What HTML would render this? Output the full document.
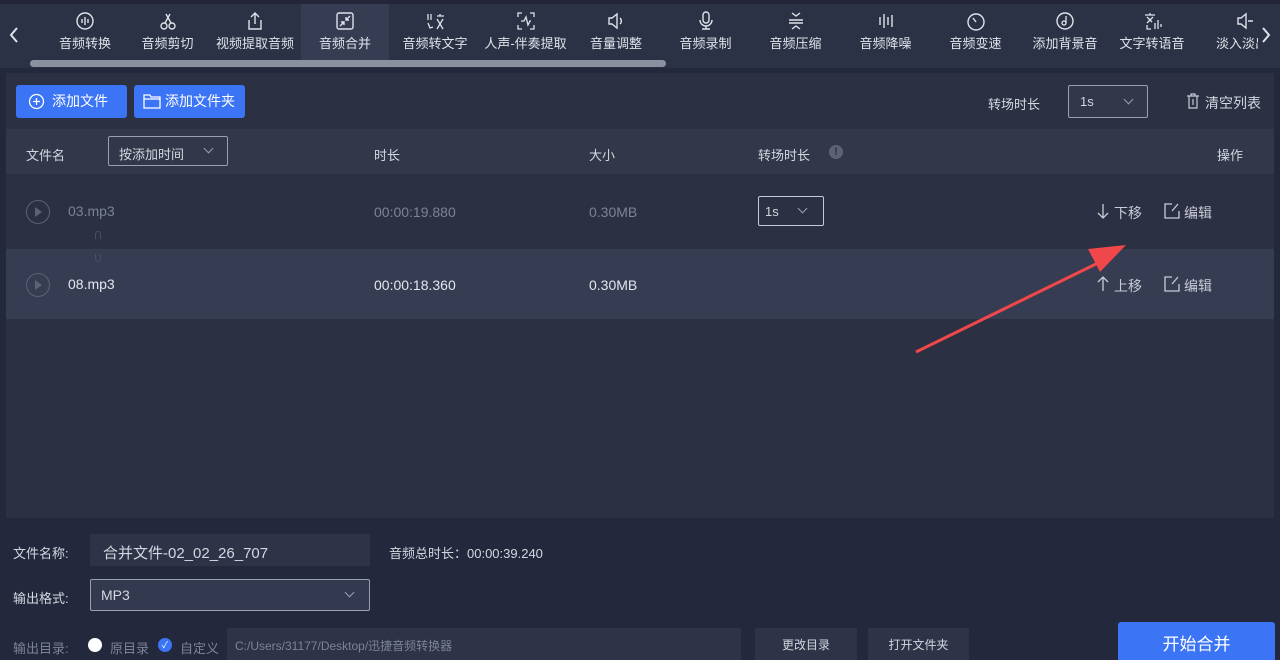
<!DOCTYPE html>
<html><head><meta charset="utf-8"><style>
*{margin:0;padding:0;box-sizing:border-box}
html,body{width:1280px;height:660px;overflow:hidden}
body{background:#24283c;font-family:"Liberation Sans","Noto Sans CJK SC",sans-serif;color:#d4d7e0;font-size:13px;position:relative}
.a{position:absolute}
.tabbar{left:0;top:4px;width:1280px;height:64px;background:#2c3245}
.tab{top:0;height:56px;text-align:center;font-size:13px;color:#dfe2ea}
.tab svg{display:block;margin:7px auto 2px;width:20px;height:20px}
.btn{background:#3b74f5;color:#fff;border-radius:3px;font-size:14px;height:33px;line-height:33px}
.sel{border:1px solid #9aa0b2;border-radius:2px;background:#323849}
.chev{position:absolute;width:7px;height:7px;border-right:1px solid #9aa0b2;border-bottom:1px solid #9aa0b2;transform:rotate(45deg)}
.dim{color:#7d8396}
</style></head><body>
<div class="a" style="left:0;top:0;width:1280px;height:4px;background:#222638"></div>
<div class="a tabbar">
 <div class="a" style="left:301px;top:0;width:88px;height:56px;background:#363d52"></div>
 <svg class="a" style="left:8px;top:22px" width="12" height="18"><path d="M9 2 L3 9 L9 16" stroke="#dfe2ea" stroke-width="2" fill="none"/></svg>
 <svg class="a" style="left:1260px;top:22px" width="12" height="18"><path d="M3 2 L9 9 L3 16" stroke="#dfe2ea" stroke-width="2" fill="none"/></svg>
 <div class="a tab" style="left:40px;width:90px"><svg viewBox="0 0 20 20"><circle cx="10" cy="10" r="8" stroke="#dfe2ea" stroke-width="1.4" fill="none"/><path d="M7 8v4M10 6v8M13 8v4" stroke="#dfe2ea" stroke-width="1.4"/></svg>音频转换</div>
 <div class="a tab" style="left:130px;width:75px"><svg viewBox="0 0 20 20"><circle cx="6" cy="15" r="3" stroke="#dfe2ea" stroke-width="1.4" fill="none"/><circle cx="14" cy="15" r="3" stroke="#dfe2ea" stroke-width="1.4" fill="none"/><path d="M7 12L12 3M13 12L8 3" stroke="#dfe2ea" stroke-width="1.4"/></svg>音频剪切</div>
 <div class="a tab" style="left:210px;width:90px"><svg viewBox="0 0 20 20"><path d="M4 9v9h12V9M10 13V2M6 6l4-4 4 4" stroke="#dfe2ea" stroke-width="1.4" fill="none"/></svg>视频提取音频</div>
 <div class="a tab" style="left:301px;width:88px"><svg viewBox="0 0 20 20"><rect x="2" y="2" width="16" height="16" rx="2" stroke="#dfe2ea" stroke-width="1.4" fill="none"/><path d="M15 5l-4 4M11 6v3h3M5 15l4-4M6 11h3v3" stroke="#dfe2ea" stroke-width="1.4" fill="none"/></svg>音频合并</div>
 <div class="a tab" style="left:395px;width:80px"><svg viewBox="0 0 20 20"><path d="M3 3v6M6 3v6M3 12l2 5 3-1M12 5h7M15 3v2M12 8l6 10M18 8l-6 10" stroke="#dfe2ea" stroke-width="1.3" fill="none"/></svg>音频转文字</div>
 <div class="a tab" style="left:478px;width:95px"><svg viewBox="0 0 20 20"><path d="M2 6V2h4M14 2h4v4M18 14v4h-4M6 18H2v-4M5 10h3l2-4 2 8 2-4h1" stroke="#dfe2ea" stroke-width="1.3" fill="none"/></svg>人声-伴奏提取</div>
 <div class="a tab" style="left:580px;width:72px"><svg viewBox="0 0 20 20"><path d="M3 7h3l5-4v14l-5-4H3z M14 7a4 4 0 010 6" stroke="#dfe2ea" stroke-width="1.4" fill="none"/></svg>音量调整</div>
 <div class="a tab" style="left:668px;width:75px"><svg viewBox="0 0 20 20"><rect x="7" y="1" width="6" height="11" rx="3" stroke="#dfe2ea" stroke-width="1.4" fill="none"/><path d="M4 9a6 6 0 0012 0M10 15v3M6 18h8" stroke="#dfe2ea" stroke-width="1.4" fill="none"/></svg>音频录制</div>
 <div class="a tab" style="left:758px;width:75px"><svg viewBox="0 0 20 20"><path d="M6 2l4 3 4-3M3 9h14M3 12h14M6 18l4-3 4 3" stroke="#dfe2ea" stroke-width="1.4" fill="none"/></svg>音频压缩</div>
 <div class="a tab" style="left:848px;width:75px"><svg viewBox="0 0 20 20"><path d="M4 6v8M8 3v14M12 6v8M16 4v12" stroke="#dfe2ea" stroke-width="1.4"/></svg>音频降噪</div>
 <div class="a tab" style="left:938px;width:75px"><svg viewBox="0 0 20 20"><circle cx="10" cy="11" r="8" stroke="#dfe2ea" stroke-width="1.4" fill="none"/><path d="M7 7l3 4" stroke="#dfe2ea" stroke-width="1.4"/></svg>音频变速</div>
 <div class="a tab" style="left:1025px;width:80px"><svg viewBox="0 0 20 20"><circle cx="10" cy="10" r="8" stroke="#dfe2ea" stroke-width="1.4" fill="none"/><circle cx="9" cy="12" r="2" stroke="#dfe2ea" stroke-width="1.3" fill="none"/><path d="M11 12V5" stroke="#dfe2ea" stroke-width="1.3"/></svg>添加背景音</div>
 <div class="a tab" style="left:1112px;width:80px"><svg viewBox="0 0 20 20"><path d="M8 2v2M3 4h10M5 6l5 5M11 6l-6 6M5 14v4h4M13 12v6M16 9v9M19 13v3" stroke="#dfe2ea" stroke-width="1.3" fill="none"/></svg>文字转语音</div>
 <div class="a tab" style="left:1200px;width:58px;overflow:hidden;text-align:left"><svg viewBox="0 0 20 20" style="margin-left:35px"><path d="M3 7h3l5-4v14l-5-4H3z M13 10h5" stroke="#dfe2ea" stroke-width="1.4" fill="none"/></svg><span style="margin-left:16px;white-space:nowrap">淡入淡出</span></div>
 <div class="a" style="left:30px;top:56px;width:636px;height:7px;border-radius:4px;background:#8a90a0"></div>
</div>
<div class="a" style="left:6px;top:73px;width:1268px;height:445px;background:#2b3043"></div>
<div class="a btn" style="left:16px;top:85px;width:111px"><svg class="a" style="left:12px;top:8px" width="17" height="17"><circle cx="8.5" cy="8.5" r="7" stroke="#fff" stroke-width="1.3" fill="none"/><path d="M8.5 5v7M5 8.5h7" stroke="#fff" stroke-width="1.3"/></svg><span style="margin-left:36px">添加文件</span></div>
<div class="a btn" style="left:134px;top:85px;width:111px"><svg class="a" style="left:9px;top:8px" width="18" height="17"><path d="M1 2h6l1 2h9v11H1z M1 6h16" stroke="#fff" stroke-width="1.3" fill="none"/></svg><span style="margin-left:31px">添加文件夹</span></div>
<div class="a" style="left:988px;top:94px">转场时长</div>
<div class="a sel" style="left:1068px;top:85px;width:80px;height:33px"><span class="a" style="left:11px;top:8px">1s</span><div class="chev" style="left:56px;top:10px"></div></div>
<svg class="a" style="left:1186px;top:93px" width="14" height="16"><path d="M1 3h12M5 3V1h4v2M3 3v12h8V3M7 6v6" stroke="#c9ccd6" stroke-width="1.2" fill="none"/></svg>
<div class="a" style="left:1205px;top:93px;font-size:14px">清空列表</div>
<div class="a" style="left:6px;top:129px;width:1268px;height:45px;background:#323849"></div>
<div class="a" style="left:26px;top:145px">文件名</div>
<div class="a sel" style="left:108px;top:136px;width:120px;height:30px"><span class="a" style="left:10px;top:7px">按添加时间</span><div class="chev" style="left:96px;top:8px"></div></div>
<div class="a" style="left:374px;top:145px">时长</div>
<div class="a" style="left:589px;top:145px">大小</div>
<div class="a" style="left:758px;top:145px">转场时长</div>
<div class="a" style="left:829px;top:145px;width:14px;height:14px;border-radius:7px;background:#5c6273;color:#2b3043;font-size:11px;font-weight:bold;text-align:center;line-height:14px">!</div>
<div class="a" style="left:1217px;top:145px">操作</div>
<!-- row1 -->
<div class="a" style="left:26px;top:200px;width:24px;height:24px;border:1px solid #5c6273;border-radius:12px"></div>
<div class="a" style="left:35px;top:207px;width:0;height:0;border-left:7px solid #5c6273;border-top:5px solid transparent;border-bottom:5px solid transparent"></div>
<div class="a dim" style="left:68px;top:203px;font-size:14px">03.mp3</div>
<div class="a dim" style="left:374px;top:204px;font-size:14px">00:00:19.880</div>
<div class="a dim" style="left:589px;top:204px;font-size:14px">0.30MB</div>
<div class="a sel" style="left:758px;top:196px;width:66px;height:30px;border-color:#c5c9d4;background:#2b3043"><span class="a" style="left:6px;top:7px">1s</span><div class="chev" style="left:40px;top:8px"></div></div>
<svg class="a" style="left:1096px;top:203px" width="14" height="16"><path d="M7 1v14M2 10l5 5 5-5" stroke="#c9ccd6" stroke-width="1.3" fill="none"/></svg>
<div class="a" style="left:1114px;top:203px;font-size:14px;color:#c9ccd6">下移</div>
<svg class="a" style="left:1163px;top:202px" width="17" height="17"><path d="M9 2H2v14h14V9M15 2l-6 7" stroke="#c9ccd6" stroke-width="1.3" fill="none"/></svg>
<div class="a" style="left:1184px;top:203px;font-size:14px;color:#c9ccd6">编辑</div>
<div class="a" style="left:95px;top:231px;width:6px;height:8px;border:1px solid #4a5064;border-bottom:none;border-radius:3px 3px 0 0"></div>
<!-- row2 -->
<div class="a" style="left:6px;top:249px;width:1268px;height:70px;background:#363d52"></div>
<div class="a" style="left:95px;top:254px;width:6px;height:8px;border:1px solid #4a5064;border-top:none;border-radius:0 0 3px 3px"></div>
<div class="a" style="left:26px;top:273px;width:24px;height:24px;border:1px solid #5c6273;border-radius:12px"></div>
<div class="a" style="left:35px;top:280px;width:0;height:0;border-left:7px solid #5c6273;border-top:5px solid transparent;border-bottom:5px solid transparent"></div>
<div class="a" style="left:68px;top:276px;font-size:14px;color:#e4e6ee">08.mp3</div>
<div class="a" style="left:374px;top:277px;font-size:14px;color:#e4e6ee">00:00:18.360</div>
<div class="a" style="left:589px;top:277px;font-size:14px;color:#e4e6ee">0.30MB</div>
<svg class="a" style="left:1096px;top:276px" width="14" height="16"><path d="M7 15V1M2 6l5-5 5 5" stroke="#c9ccd6" stroke-width="1.3" fill="none"/></svg>
<div class="a" style="left:1114px;top:276px;font-size:14px;color:#c9ccd6">上移</div>
<svg class="a" style="left:1163px;top:275px" width="17" height="17"><path d="M9 2H2v14h14V9M15 2l-6 7" stroke="#c9ccd6" stroke-width="1.3" fill="none"/></svg>
<div class="a" style="left:1184px;top:276px;font-size:14px;color:#c9ccd6">编辑</div>
<!-- arrow -->
<svg class="a" style="left:0;top:0" width="1280" height="660"><path d="M916 352 L1100 262" stroke="#f0474a" stroke-width="3"/><path d="M1126 245 L1088 249 L1100 272 Z" fill="#f0474a"/></svg>
<!-- bottom -->
<div class="a" style="left:13px;top:543px">文件名称:</div>
<div class="a" style="left:90px;top:534px;width:280px;height:32px;background:#2e3347"></div>
<div class="a" style="left:103px;top:542px;font-size:15px">合并文件-02_02_26_707</div>
<div class="a" style="left:389px;top:543px">音频总时长：00:00:39.240</div>
<div class="a" style="left:13px;top:588px">输出格式:</div>
<div class="a sel" style="left:90px;top:579px;width:280px;height:32px;background:#333a50"><span class="a" style="left:10px;top:7px;font-size:14px">MP3</span><div class="chev" style="left:255px;top:9px"></div></div>
<div class="a dim" style="left:13px;top:638px">输出目录:</div>
<div class="a" style="left:88px;top:638px;width:14px;height:14px;border-radius:7px;background:#fff"></div>
<div class="a dim" style="left:110px;top:638px">原目录</div>
<div class="a" style="left:158px;top:638px;width:14px;height:14px;border-radius:7px;background:#3b74f5;color:#fff;font-size:9px;text-align:center;line-height:14px">✓</div>
<div class="a dim" style="left:180px;top:638px">自定义</div>
<div class="a" style="left:227px;top:628px;width:514px;height:32px;background:#2e3347"></div>
<div class="a dim" style="left:235px;top:637px;font-size:12px">C:/Users/31177/Desktop/迅捷音频转换器</div>
<div class="a" style="left:755px;top:628px;width:102px;height:32px;background:#2e3347;text-align:center;line-height:34px;font-size:12px">更改目录</div>
<div class="a" style="left:868px;top:628px;width:101px;height:32px;background:#2e3347;text-align:center;line-height:34px;font-size:12px">打开文件夹</div>
<div class="a" style="left:1118px;top:622px;width:157px;height:38px;background:#3b74f5;border-radius:3px 3px 0 0;color:#fff;font-size:17px;text-align:center;line-height:46px">开始合并</div>
</body></html>
